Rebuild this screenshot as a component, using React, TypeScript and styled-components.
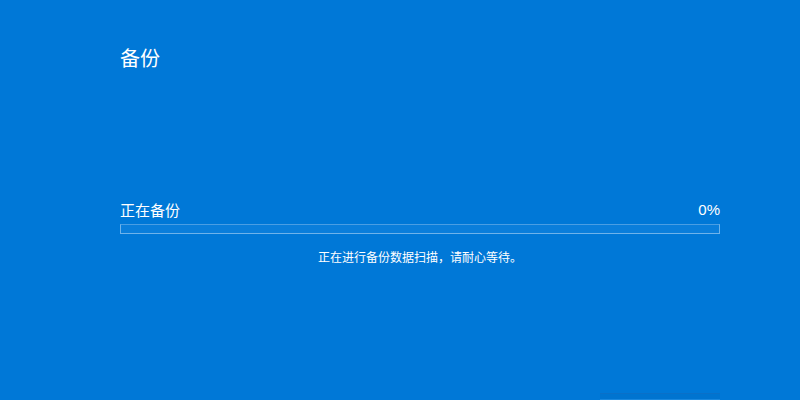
import styled, { createGlobalStyle } from "styled-components";

const GlobalStyle = createGlobalStyle`
  html, body {
    margin: 0;
    padding: 0;
    background: #0078d7;
  }
  body {
    font-family: "Noto Sans CJK SC", "Noto Sans", sans-serif;
    color: #ffffff;
  }
`;

const Screen = styled.div`
  box-sizing: border-box;
  width: 800px;
  height: 400px;
  background: #0078d7;
  padding: 44px 80px 0 120px;
  display: flex;
  flex-direction: column;
  position: relative;
  overflow: hidden;
`;

const Title = styled.h1`
  margin: 0;
  font-size: 20px;
  font-weight: 400;
  line-height: 28px;
  color: #ffffff;
`;

const ProgressBlock = styled.div`
  margin-top: 128px;
  display: flex;
  flex-direction: column;
`;

const LabelRow = styled.div`
  display: flex;
  justify-content: space-between;
  align-items: flex-end;
  font-size: 15px;
  line-height: 20px;
  color: #ffffff;
`;

const Percent = styled.span`
  font-family: "Liberation Sans", "Noto Sans", sans-serif;
  font-size: 15px;
`;

const Track = styled.div`
  box-sizing: border-box;
  margin-top: 4px;
  height: 10px;
  border: 1px solid #6fb3ea;
  border-top-color: #4a9ee3;
  background: #0a7edb;
`;

const Fill = styled.div`
  height: 100%;
  background: #ffffff;
`;

const Message = styled.div`
  margin-top: 14px;
  text-align: center;
  font-size: 12px;
  line-height: 18px;
  color: #ffffff;
`;

const BottomButton = styled.div`
  position: absolute;
  left: 600px;
  top: 393px;
  width: 120px;
  height: 30px;
  box-sizing: border-box;
  border-top: 1px solid #0a70c8;
  background: #0074d0;
  &::after {
    content: "";
    position: absolute;
    left: 0;
    right: 0;
    top: 5px;
    height: 2px;
    background: #1a88df;
  }
`;

export default function App() {
  const progress = 0;
  return (
    <>
      <GlobalStyle />
      <Screen>
        <Title>备份</Title>
        <ProgressBlock>
          <LabelRow>
            <span>正在备份</span>
            <Percent>{progress}%</Percent>
          </LabelRow>
          <Track>
            <Fill style={{ width: `${progress}%` }} />
          </Track>
          <Message>正在进行备份数据扫描，请耐心等待。</Message>
        </ProgressBlock>
        <BottomButton />
      </Screen>
    </>
  );
}
